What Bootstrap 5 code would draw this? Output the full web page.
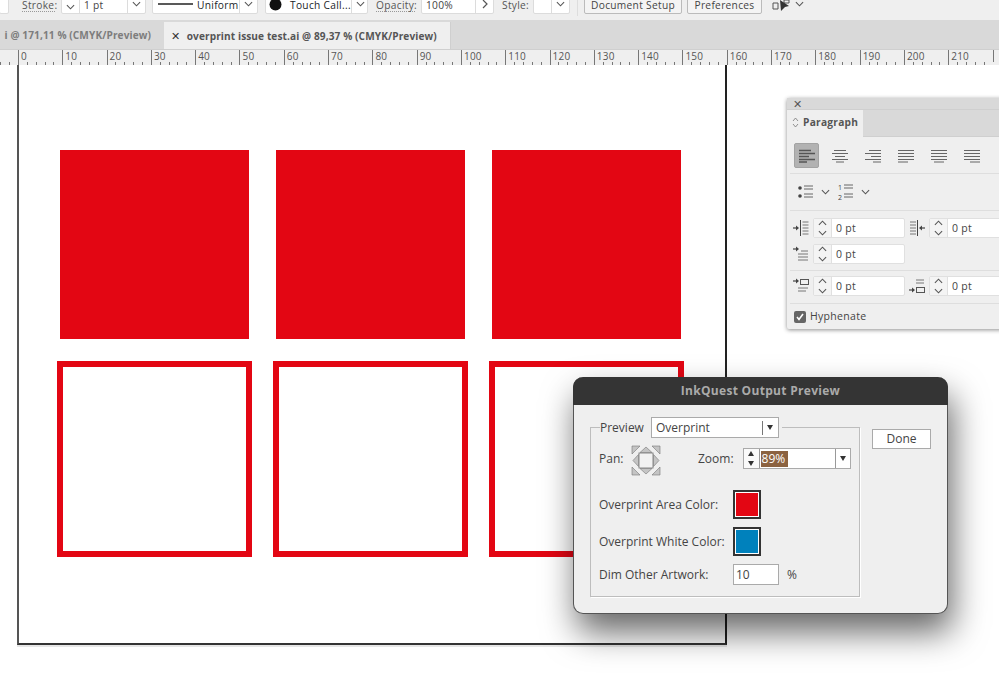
<!doctype html>
<html lang="en">
<head>
<meta charset="utf-8">
<title>InkQuest Output Preview</title>
<link href="https://cdn.jsdelivr.net/npm/bootstrap@5.3.0/dist/css/bootstrap.min.css" rel="stylesheet">
<style>
html,body{height:100%;overflow:hidden;background:#fff}
body{font-family:"Open Sans","Liberation Sans",sans-serif;color:#444;position:relative}
.defs{position:absolute}
.tb{height:22px;background:#efefef;border-bottom:2px solid #d9d9d9;overflow:hidden;font-size:10.2px;letter-spacing:.3px}
.tb-item{display:flex;align-items:center;flex:none;height:20px;margin-top:-6px}
.tb-t{line-height:10px;margin-top:2px;white-space:nowrap}
.tb-lbl{flex:none;line-height:10px;height:12px;color:#555;border-bottom:1px dotted #999;white-space:nowrap}
.tb-plain{border-bottom:0}
.box{background:#fff;border:1px solid #dcdcdc;border-radius:2px;color:#444}
.box-g{background:#f4f4f4;border-color:#bbb}
.cell{display:flex;align-items:center;justify-content:center;height:100%;flex:none;width:17px}
.cell-s{width:18px;align-items:flex-end;padding-bottom:3px;border-right:1px solid #dcdcdc}
.cell-m{flex:1 1 auto;height:100%;border-right:1px solid #dcdcdc;display:flex;align-items:center;padding-left:4px}
.b0{width:10px;margin-left:-1px}
.l-st{width:33px;margin-left:13px}
.b-st{width:85px;margin-left:6px}
.b-ln{width:106px;margin-left:6px}
.b-tc{width:103px;margin-left:7px}
.l-op{width:39px;margin-left:8px}
.b-op{width:73px;margin-left:6px}
.l-sy{width:26px;margin-left:8px}
.b-sy{width:37px;margin-left:5px}
.tb-sep{width:1px;background:#ddd;margin-left:7px;height:22px}
.b-doc{width:98px;margin-left:6px}
.b-pr{width:75px;margin-left:5px}
.ln-ic{margin:0 4px 0 1px}
.dot-ic{margin:0 8px 0 -1px}
.tb-ic{margin-left:10px;flex:none}
.tb-ca{margin:1px 0 0 3px;flex:none}
.tabs{height:28px;background:#d9d9d9;border-bottom:1px solid #cfcfcf;font-weight:700;font-size:10.1px;letter-spacing:.1px}
.tab-off{width:164px;color:#7d7d7d;white-space:nowrap;text-align:right;padding-right:13px;line-height:27px}
.tab-on{width:287px;background:#efefef;color:#555;line-height:27px;white-space:nowrap;padding-left:7px;border-right:1px solid #cfcfcf}
.tab-x{display:inline-block;width:13px;font-weight:400;font-size:11px;color:#333}
.ruler{height:15px;background-color:#efefef;overflow:hidden;font-size:10px;color:#555;
 background-image:repeating-linear-gradient(90deg,#777 0 1px,transparent 1px 8.86px);background-size:100% 3px;background-repeat:no-repeat;background-position:-8.6px bottom;letter-spacing:.2px}
.rul-in{margin-left:-26.3px}
.rul-c{flex:0 0 44.3px;border-left:1px solid #777;height:12px;padding-left:2px;line-height:13px;background:#efefef}
.canvas{background:#fff;height:633px;padding-left:17px}
.artboard{width:710px;height:580px;border-left:2px solid #555;border-right:2px solid #222;border-bottom:2px solid #333;box-shadow:0 2px 0 #e6e6e6;padding:85px 0 0 41px}
.art-grid{display:grid;grid-template-columns:repeat(3,189px);grid-auto-rows:189px;column-gap:27px;row-gap:25px}
.sq-fill{background:#e30613}
.sq-line{border:6px solid #e30613;margin:-3px -3px -4px -3px}
.panel{position:absolute;left:787px;top:98px;width:240px;height:231px;background:#efefef;box-shadow:0 1px 4px rgba(0,0,0,.45);border-radius:2px 0 0 2px;font-size:10.5px;letter-spacing:.3px;color:#444}
.p-head{height:12px;background:#d9d9d9;padding-left:6px;line-height:12px;font-size:11px;color:#555;border-bottom:1px solid #cfcfcf}
.p-tabs{height:27px;background:#d9d9d9;border-bottom:1px solid #cfcfcf}
.p-tab{width:76px;height:27px;background:#efefef;font-weight:700;font-size:10.2px;padding-left:5px;padding-bottom:2px;color:#555;letter-spacing:.25px}
.p-sec{border-bottom:1px solid #dedede;margin:0 0 0 3px;padding-left:4px}
.al-row{height:37px;padding-top:6px}
.al-btn{width:25px;height:25px;flex:none;display:flex;align-items:center;justify-content:center;margin-right:8px}
.al-on{background:#b2b2b2;border:1px solid #a3a3a3;border-radius:2px}
.ls-row{height:37px}
.ind-sec{height:60px;padding-left:3px;padding-top:7px}
.ind-2{margin-top:6px}
.sp-sec{height:33px;padding-left:3px;padding-top:5px}
.hy-row{padding:5px 0 0 7px}
.num{display:flex;flex:none;width:92px;height:20px;background:#fff;border:1px solid #e0e0e0;border-radius:2px;line-height:18px}
.num-s{width:18px;flex:none;background:#f4f4f4;border-right:1px solid #e0e0e0;display:flex;align-items:center;justify-content:center}
.num-v{padding-left:4px}
.chk{width:12px;height:12px;background:#666;border-radius:2px;display:flex;align-items:center;justify-content:center}
.dlg{position:absolute;left:573px;top:377px;width:375px;height:237px;background:#efefef;border:1px solid #555;border-top:0;border-radius:10px;box-shadow:4px 18px 34px rgba(0,0,0,.6);font-size:12px;color:#444}
.dlg-t{height:28px;background:#343434;border-radius:10px 10px 0 0;margin:0 -1px;color:#aaa;font-weight:700;font-size:12px;line-height:27px;text-align:center;letter-spacing:.3px}
.dlg-b{padding:12px 16px 0 16px}
fieldset.fs{width:270px;height:180px;border:1px solid #bdbdbd;padding:0 0 0 8px;box-shadow:1px 1px 0 #fff;flex:none}
legend.lg{float:none;width:auto;margin:0 0 0 1px;padding:0 3px 0 0;font-size:inherit;line-height:20px;display:flex;align-items:center;color:#444}
.sel{width:128px;height:21px;margin-left:7px;background:#fff;border:1px solid #aaa;display:flex;align-items:center;padding-left:4px;line-height:18px}
.sel-d{margin-left:auto;width:16px;height:14px;border-left:1px solid #777;display:flex;align-items:center;justify-content:center}
.tri{width:0;height:0;border-left:3.5px solid transparent;border-right:3.5px solid transparent;border-top:5px solid #333}
.tri-up{border-top:0;border-bottom:5px solid #333}
.done{width:59px;height:20px;margin:12px 0 0 12px;background:#fff;border:1px solid #aaa;border-radius:0;font-size:12px;line-height:18px;padding:0;color:#444;--bs-btn-hover-bg:#fff}
.pan-row{height:32px;margin-top:7px}
.pan-l{width:32px;padding-top:5px}
.zoom-l{margin-left:37px;padding-top:5px}
.zoomer{width:108px;height:21px;background:#fff;border:1px solid #aaa;margin-left:9px;margin-top:3px;display:flex;align-items:center}
.z-sp{width:16px;height:19px;flex:none;display:flex;flex-direction:column;justify-content:space-around;align-items:center;background:#fafafa;border-right:1px solid #999}
.z-val{background:#8b6240;color:#fff;width:27px;height:16px;line-height:16px;margin-left:1px;padding-left:1px}
.z-d{margin-left:auto;width:15px;height:19px;border-left:1px solid #999;display:flex;align-items:center;justify-content:center}
.cl-row{height:37px}
.cl-first{margin-top:9px}
.dim-row{height:29px}
.lbl-w{width:134px;flex:none}
.swatch{width:28px;height:29px;border:2px solid #333;box-shadow:inset 0 0 0 1px #fff;flex:none}
.sw-r{background:#e30613}
.sw-b{background:#0081bc}
.dim{width:46px;height:21px;background:#fff;border:1px solid #aaa;padding-left:2px;line-height:19px}
</style>
</head>
<body>
<svg width="0" height="0" class="defs">
<symbol id="chev" viewBox="0 0 10 6"><path d="M1 1l4 4 4-4" fill="none" stroke="#555" stroke-width="1.2"/></symbol>
<symbol id="chevu" viewBox="0 0 10 6"><path d="M1 5l4-4 4 4" fill="none" stroke="#555" stroke-width="1.2"/></symbol>
<symbol id="al-l" viewBox="0 0 16 14"><path d="M0 1.5h12M0 4.5h16M0 7.5h10M0 10.5h16M0 13h8" stroke="#555" stroke-width="1.3"/></symbol>
<symbol id="al-c" viewBox="0 0 16 14"><path d="M2 1.5h12M0 4.5h16M3 7.5h10M0 10.5h16M4 13h8" stroke="#666" stroke-width="1.2"/></symbol>
<symbol id="al-r" viewBox="0 0 16 14"><path d="M4 1.5h12M0 4.5h16M6 7.5h10M0 10.5h16M8 13h8" stroke="#666" stroke-width="1.2"/></symbol>
<symbol id="al-j" viewBox="0 0 16 14"><path d="M0 1.5h16M0 4.5h16M0 7.5h16M0 10.5h16M0 13h10" stroke="#666" stroke-width="1.2"/></symbol>
<symbol id="al-jc" viewBox="0 0 16 14"><path d="M0 1.5h16M0 4.5h16M0 7.5h16M0 10.5h16M3 13h10" stroke="#666" stroke-width="1.2"/></symbol>
<symbol id="al-jr" viewBox="0 0 16 14"><path d="M0 1.5h16M0 4.5h16M0 7.5h16M0 10.5h16M6 13h10" stroke="#666" stroke-width="1.2"/></symbol>
<symbol id="ind-l" viewBox="0 0 16 16"><path d="M0 8h4" stroke="#444" stroke-width="1.2"/><path d="M3 5.500L6 8l-3 2.500z" fill="#444"/><path d="M7.500 0v16" stroke="#444"/><path d="M9.500 2h6M9.500 5h6M9.500 8h6M9.500 11h6M9.500 14h6" stroke="#777"/></symbol>
<symbol id="ind-r" viewBox="0 0 16 16"><path d="M16 8h-4" stroke="#444" stroke-width="1.2"/><path d="M13 5.500L10 8l3 2.500z" fill="#444"/><path d="M8.500 0v16" stroke="#444"/><path d="M1 2h6M1 5h6M1 8h6M1 11h6M1 14h6" stroke="#777"/></symbol>
<symbol id="ind-f" viewBox="0 0 16 16"><path d="M0 3h4" stroke="#444" stroke-width="1.2"/><path d="M3 .5L6 3 3 5.500z" fill="#444"/><path d="M8 5h7M5 8h10M5 11h10M5 14h10" stroke="#777"/></symbol>
<symbol id="sp-b" viewBox="0 0 16 16"><path d="M0 3h4" stroke="#444" stroke-width="1.200"/><path d="M3 .5L6 3 3 5.500z" fill="#444"/><rect x="7.500" y="1.500" width="8" height="5" fill="none" stroke="#555"/><path d="M5 10h10M5 13h8" stroke="#777"/></symbol>
<symbol id="sp-a" viewBox="0 0 16 16"><path d="M0 12h4" stroke="#444" stroke-width="1.200"/><path d="M3 9.500L6 12l-3 2.500z" fill="#444"/><rect x="7.500" y="9.500" width="8" height="5" fill="none" stroke="#555"/><path d="M7 2h8M7 5h8" stroke="#777"/></symbol>
</svg>

<div class="tb d-flex">
  <div class="tb-item box b0"></div>
  <div class="tb-lbl l-st">Stroke:</div>
  <div class="tb-item box b-st">
    <div class="cell cell-s"><svg width="9" height="6"><use href="#chev"/></svg></div>
    <div class="cell-m"><span class="tb-t">1 pt</span></div>
    <div class="cell"><svg width="9" height="6"><use href="#chev"/></svg></div>
  </div>
  <div class="tb-item box b-ln">
    <div class="cell-m"><svg width="35" height="4" class="ln-ic"><path d="M0 2h35" stroke="#222" stroke-width="1.600"/></svg><span class="tb-t text-dark">Uniform</span></div>
    <div class="cell"><svg width="9" height="6"><use href="#chev"/></svg></div>
  </div>
  <div class="tb-item box b-tc">
    <div class="cell-m"><svg width="13" height="13" class="dot-ic"><circle cx="6.500" cy="6.500" r="6" fill="#111"/></svg><span class="tb-t text-dark">Touch Call...</span></div>
    <div class="cell"><svg width="9" height="6"><use href="#chev"/></svg></div>
  </div>
  <div class="tb-lbl l-op">Opacity:</div>
  <div class="tb-item box b-op">
    <div class="cell-m"><span class="tb-t">100%</span></div>
    <div class="cell"><svg width="6" height="10"><path d="M1 1l4 4-4 4" fill="none" stroke="#555" stroke-width="1.200"/></svg></div>
  </div>
  <div class="tb-lbl tb-plain l-sy">Style:</div>
  <div class="tb-item box b-sy">
    <div class="cell-m"></div>
    <div class="cell"><svg width="9" height="6"><use href="#chev"/></svg></div>
  </div>
  <div class="tb-item tb-sep"></div>
  <div class="tb-item box box-g justify-content-center b-doc"><span class="tb-t">Document Setup</span></div>
  <div class="tb-item box box-g justify-content-center b-pr"><span class="tb-t">Preferences</span></div>
  <svg width="20" height="13" viewBox="0 0 20 13" class="tb-ic"><path d="M1 3h5v6H1zM12 0h5v3h-5z" fill="none" stroke="#555"/><path d="M8 0l9 6-4 1-4 4z" fill="#333"/></svg>
  <svg width="9" height="6" class="tb-ca"><use href="#chev"/></svg>
</div>

<div class="tabs d-flex">
  <div class="tab-off">i @ 171,11 % (CMYK/Preview)</div>
  <div class="tab-on"><span class="tab-x">✕</span> overprint issue test.ai @ 89,37 % (CMYK/Preview)</div>
</div>

<div class="ruler">
  <div class="rul-in d-flex">
    <div class="rul-c"></div><div class="rul-c">0</div><div class="rul-c">10</div><div class="rul-c">20</div><div class="rul-c">30</div><div class="rul-c">40</div><div class="rul-c">50</div><div class="rul-c">60</div><div class="rul-c">70</div><div class="rul-c">80</div><div class="rul-c">90</div><div class="rul-c">100</div><div class="rul-c">110</div><div class="rul-c">120</div><div class="rul-c">130</div><div class="rul-c">140</div><div class="rul-c">150</div><div class="rul-c">160</div><div class="rul-c">170</div><div class="rul-c">180</div><div class="rul-c">190</div><div class="rul-c">200</div><div class="rul-c">210</div><div class="rul-c"></div>
  </div>
</div>

<div class="canvas">
  <div class="artboard">
    <div class="art-grid">
      <div class="sq-fill"></div><div class="sq-fill"></div><div class="sq-fill"></div>
      <div class="sq-line"></div><div class="sq-line"></div><div class="sq-line"></div>
    </div>
  </div>
</div>

<div class="panel">
  <div class="p-head">✕</div>
  <div class="p-tabs"><div class="p-tab d-flex align-items-center gap-1"><svg width="7" height="11" viewBox="0 0 7 11"><path d="M1 4l2.500-3L6 4M1 7l2.500 3L6 7" fill="none" stroke="#777" stroke-width=".8"/></svg>Paragraph</div></div>
  <div class="p-sec d-flex al-row">
    <div class="al-btn al-on"><svg width="16" height="14"><use href="#al-l"/></svg></div>
    <div class="al-btn"><svg width="16" height="14"><use href="#al-c"/></svg></div>
    <div class="al-btn"><svg width="16" height="14"><use href="#al-r"/></svg></div>
    <div class="al-btn"><svg width="16" height="14"><use href="#al-j"/></svg></div>
    <div class="al-btn"><svg width="16" height="14"><use href="#al-jc"/></svg></div>
    <div class="al-btn"><svg width="16" height="14"><use href="#al-jr"/></svg></div>
  </div>
  <div class="p-sec d-flex align-items-center ls-row">
    <svg width="15" height="16" viewBox="0 0 15 16" class="ms-1"><circle cx="2" cy="4" r="1.800" fill="#444"/><circle cx="2" cy="12" r="1.800" fill="#444"/><path d="M6 2h9M6 5h9M6 10h9M6 13h9" stroke="#666"/></svg>
    <svg width="9" height="6" class="ms-2"><use href="#chev"/></svg>
    <svg width="15" height="18" viewBox="0 0 15 18" class="ms-2"><path d="M6 2h9M6 5h9M6 11h9M6 14h9" stroke="#666"/><text x="0" y="7" font-size="7" fill="#444" font-family="Open Sans">1</text><text x="0" y="16.500" font-size="7" fill="#444" font-family="Open Sans">2</text></svg>
    <svg width="9" height="6" class="ms-2"><use href="#chev"/></svg>
  </div>
  <div class="p-sec ind-sec">
    <div class="d-flex align-items-center">
      <svg width="16" height="16"><use href="#ind-l"/></svg>
      <div class="num ms-1"><div class="num-s flex-column gap-1"><svg width="9" height="6"><use href="#chevu"/></svg><svg width="9" height="6"><use href="#chev"/></svg></div><div class="num-v">0 pt</div></div>
      <svg width="16" height="16" class="ms-1"><use href="#ind-r"/></svg>
      <div class="num ms-1"><div class="num-s flex-column gap-1"><svg width="9" height="6"><use href="#chevu"/></svg><svg width="9" height="6"><use href="#chev"/></svg></div><div class="num-v">0 pt</div></div>
    </div>
    <div class="d-flex align-items-center ind-2">
      <svg width="16" height="16"><use href="#ind-f"/></svg>
      <div class="num ms-1"><div class="num-s flex-column gap-1"><svg width="9" height="6"><use href="#chevu"/></svg><svg width="9" height="6"><use href="#chev"/></svg></div><div class="num-v">0 pt</div></div>
    </div>
  </div>
  <div class="p-sec sp-sec">
    <div class="d-flex align-items-center">
      <svg width="16" height="16"><use href="#sp-b"/></svg>
      <div class="num ms-1"><div class="num-s flex-column gap-1"><svg width="9" height="6"><use href="#chevu"/></svg><svg width="9" height="6"><use href="#chev"/></svg></div><div class="num-v">0 pt</div></div>
      <svg width="16" height="16" class="ms-1"><use href="#sp-a"/></svg>
      <div class="num ms-1"><div class="num-s flex-column gap-1"><svg width="9" height="6"><use href="#chevu"/></svg><svg width="9" height="6"><use href="#chev"/></svg></div><div class="num-v">0 pt</div></div>
    </div>
  </div>
  <div class="d-flex align-items-center gap-1 hy-row">
    <div class="chk"><svg width="10" height="10" viewBox="0 0 10 10"><path d="M2 5l2 2.500L8 2" fill="none" stroke="#fff" stroke-width="1.600"/></svg></div>
    <span>Hyphenate</span>
  </div>
</div>

<div class="dlg">
  <div class="dlg-t">InkQuest Output Preview</div>
  <div class="dlg-b d-flex align-items-start">
    <fieldset class="fs">
      <legend class="lg">Preview<div class="sel">Overprint<div class="sel-d"><span class="tri"></span></div></div></legend>
      <div class="d-flex align-items-start pan-row">
        <span class="pan-l">Pan:</span>
        <svg width="30" height="31" viewBox="0 0 30 31"><g fill="#c4c4c4" stroke="#777" stroke-width=".6"><path d="M1 1h8L1 9zM29 1h-8l8 8zM1 30h8l-8-8zM29 30h-8l8-8z"/><path d="M15 2l6 5.500H9zM15 29l-6-5.500h12zM2 15.500l5.500-6v12zM28 15.500l-5.500-6v12z"/></g><rect x="8" y="8" width="14" height="15" fill="#f2f2f2" stroke="#888"/></svg>
        <span class="zoom-l">Zoom:</span>
        <div class="zoomer"><div class="z-sp"><span class="tri tri-up"></span><span class="tri"></span></div><div class="z-val">89%</div><div class="z-d"><span class="tri"></span></div></div>
      </div>
      <div class="d-flex align-items-center cl-row cl-first"><span class="lbl-w">Overprint Area Color:</span><div class="swatch sw-r"></div></div>
      <div class="d-flex align-items-center cl-row"><span class="lbl-w">Overprint White Color:</span><div class="swatch sw-b"></div></div>
      <div class="d-flex align-items-center dim-row"><span class="lbl-w">Dim Other Artwork:</span><div class="dim">10</div><span class="ms-2">%</span></div>
    </fieldset>
    <button type="button" class="btn done">Done</button>
  </div>
</div>

<script src="https://cdn.jsdelivr.net/npm/bootstrap@5.3.0/dist/js/bootstrap.bundle.min.js"></script>
</body>
</html>
